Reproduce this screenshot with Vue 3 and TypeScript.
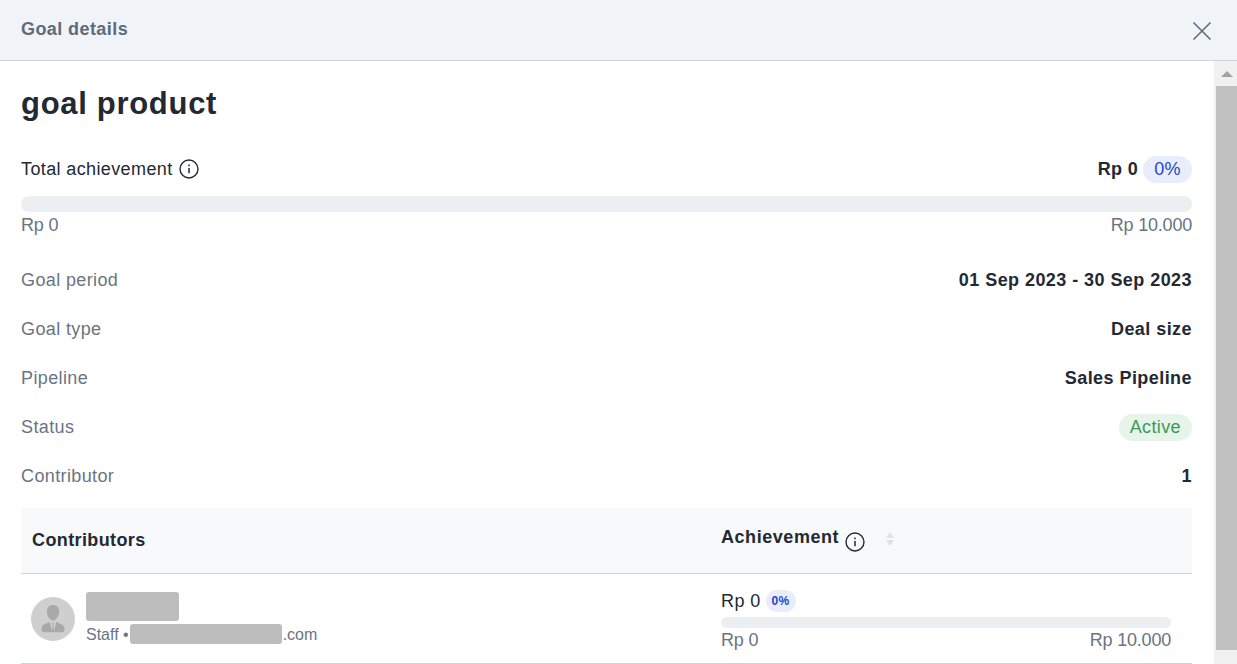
<script setup lang="ts">
interface DetailRow {
  label: string;
  value: string;
  kind?: "status";
}

const rows: DetailRow[] = [
  { label: "Goal period", value: "01 Sep 2023 - 30 Sep 2023" },
  { label: "Goal type", value: "Deal size" },
  { label: "Pipeline", value: "Sales Pipeline" },
  { label: "Status", value: "Active", kind: "status" },
  { label: "Contributor", value: "1" },
];
</script>

<template>
  <div class="modal">
    <header class="modal-header">
      <span class="modal-title">Goal details</span>
      <svg class="close" width="20" height="20" viewBox="0 0 20 20" fill="none">
        <path d="M1.500 1.500 18.500 18.500M18.500 1.500 1.500 18.500" stroke="#5f6b7a" stroke-width="1.6" />
      </svg>
    </header>

    <div class="modal-main">
      <div class="content">
        <h1 class="goal-name">goal product</h1>

        <div class="total">
          <div class="total-top">
            <span class="total-label">
              Total achievement
              <svg class="info" width="20" height="20" viewBox="0 0 20 20" fill="none">
                <circle cx="10" cy="10" r="9" stroke="#232933" stroke-width="1.4" />
                <path d="M10 9v5.200M10 5.600v1.600" stroke="#232933" stroke-width="1.500" />
              </svg>
            </span>
            <span class="total-value">
              <b>Rp 0</b>
              <span class="pct">0%</span>
            </span>
          </div>
          <div class="bar"></div>
          <div class="bar-ends">
            <span>Rp 0</span>
            <span>Rp 10.000</span>
          </div>
        </div>

        <div class="details">
          <div v-for="row in rows" :key="row.label" class="detail-row">
            <span class="detail-label">{{ row.label }}</span>
            <span v-if="row.kind === 'status'" class="status">{{ row.value }}</span>
            <b v-else class="detail-value">{{ row.value }}</b>
          </div>
        </div>

        <div class="table">
          <div class="table-head">
            <div class="col-name">Contributors</div>
            <div class="col-ach head-ach">
              <span>Achievement</span>
              <svg class="info-small" width="20" height="20" viewBox="0 0 20 20" fill="none">
                <circle cx="10" cy="10" r="9" stroke="#232933" stroke-width="1.4" />
                <path d="M10 9v5.200M10 5.600v1.600" stroke="#232933" stroke-width="1.500" />
              </svg>
              <svg class="sort" width="10" height="16" viewBox="0 0 10 16">
                <path d="M5 1 9 7H1ZM1 9h8l-4 6Z" fill="#dfe2e6" />
              </svg>
            </div>
          </div>

          <div class="table-row">
            <div class="col-name person">
              <div class="avatar">
                <svg width="44" height="44" viewBox="0 0 44 44">
                  <circle cx="22" cy="22" r="22" fill="#cfcfcf" />
                  <path d="M22 8c-3.600 0-6.200 2.700-6.200 6.200 0 3.600 2.500 9.300 6.200 9.300s6.200-5.700 6.200-9.300C28.200 10.700 25.600 8 22 8Z" fill="#a9a9a9" />
                  <path d="M18.800 25 13.500 27.200C11.700 28 10.500 29.800 10.500 31.800V33c0 1.300 1 2.200 2.200 2.200h18.600c1.200 0 2.200-.9 2.200-2.200v-1.200c0-2-1.200-3.800-3-4.600L25.200 25l-2.200 9.500-.6-6.500.8-2h-2.400l.8 2-.6 6.500Z" fill="#a9a9a9" />
                </svg>
              </div>
              <div class="person-text">
                <div class="mask-name"></div>
                <div class="person-sub">
                  <span class="sub-text">Staff •</span><span class="mask-mail"></span><span class="sub-text">.com</span>
                </div>
              </div>
            </div>
            <div class="col-ach">
              <div class="row-top">
                <span>Rp 0</span>
                <span class="pct-small">0%</span>
              </div>
              <div class="bar bar-small"></div>
              <div class="bar-ends small-ends">
                <span>Rp 0</span>
                <span>Rp 10.000</span>
              </div>
            </div>
          </div>
        </div>
      </div>

      <div class="scrollbar">
        <div class="scroll-up"></div>
        <div class="scroll-thumb"></div>
      </div>
    </div>
  </div>
</template>

<style>
html,
body {
  margin: 0;
  overflow: hidden;
  background: #fff;
}
</style>

<style scoped>
.modal {
  width: 1237px;
  height: 664px;
  overflow: hidden;
  display: flex;
  flex-direction: column;
  font-family: "Liberation Sans", Arial, sans-serif;
  color: #232933;
  font-size: 18px;
  letter-spacing: 0.38px;
}

.modal-header {
  height: 60px;
  flex: none;
  box-sizing: content-box;
  display: flex;
  align-items: center;
  justify-content: space-between;
  padding: 0 25px 0 21px;
  background: #f0f4f9;
  border-bottom: 1px solid #cfd4dc;
}

.modal-title {
  font-size: 18px;
  font-weight: 700;
  color: #5f6b7a;
  margin-top: -2px;
  letter-spacing: 0.42px;
}

.close {
  display: block;
  margin-top: 2px;
}

.modal-main {
  flex: 1;
  min-height: 0;
  display: flex;
}

.content {
  width: 1171px;
  flex: none;
  padding: 0 22px 0 21px;
}

.goal-name {
  margin: 23px 0 0;
  font-size: 31px;
  line-height: 40px;
  font-weight: 700;
  letter-spacing: 0.7px;
}

.total {
  margin-top: 30px;
}

.total-top {
  height: 30px;
  display: flex;
  align-items: center;
  justify-content: space-between;
}

.total-label {
  display: flex;
  align-items: center;
  gap: 6px;
}

.total-value {
  display: flex;
  align-items: center;
  gap: 5px;
}

.pct {
  height: 27px;
  line-height: 27px;
  padding: 0 11px;
  border-radius: 14px;
  background: #e9edfb;
  color: #2447c9;
}

.bar {
  height: 16px;
  margin-top: 12px;
  border-radius: 8px;
  background: #eceff2;
}

.bar-ends {
  display: flex;
  justify-content: space-between;
  line-height: 26px;
  color: #6a7482;
  letter-spacing: -0.2px;
}

.details {
  margin-top: 18px;
}

.detail-row {
  height: 49px;
  display: flex;
  align-items: center;
  justify-content: space-between;
  color: #6a7482;
}

.detail-value {
  color: #232933;
  letter-spacing: 0.44px;
}

.status {
  height: 27px;
  line-height: 27px;
  padding: 0 11px;
  border-radius: 14px;
  background: #e6f4ea;
  color: #3c9a55;
}

.table {
  margin-top: 7px;
}

.table-head {
  height: 65px;
  display: flex;
  align-items: center;
  background: #f8f9fb;
  border-bottom: 1px solid #cfd4dc;
  font-weight: 700;
}

.col-name {
  width: 700px;
  flex: none;
  box-sizing: border-box;
  padding-left: 11px;
}

.col-ach {
  width: 450px;
  flex: none;
}

.head-ach {
  display: flex;
  align-items: center;
  gap: 6px;
  margin-top: -7px;
  letter-spacing: 0.55px;
}

.info-small {
  margin-top: 10px;
}

.sort {
  margin-left: 14px;
  margin-top: 3px;
}

.table-row {
  height: 89px;
  display: flex;
  align-items: center;
  border-bottom: 1px solid #cfd4dc;
}

.person {
  display: flex;
  align-items: center;
  gap: 11px;
  padding-left: 10px;
}

.avatar {
  height: 44px;
  margin-top: 1px;
}

.avatar svg {
  display: block;
}

.person-text {
  display: flex;
  flex-direction: column;
  gap: 3px;
  margin-top: -2px;
}

.mask-name {
  width: 93px;
  height: 29px;
  border-radius: 3px;
  background: #bdbdbd;
}

.person-sub {
  display: flex;
  align-items: center;
  height: 20px;
  font-size: 16px;
  color: #6a7482;
  letter-spacing: 0;
}

.sub-text {
  padding-top: 2px;
}

.mask-mail {
  width: 152px;
  height: 20px;
  margin-left: 1px;
  margin-right: 1px;
  border-radius: 3px;
  background: #bdbdbd;
}

.row-top {
  display: flex;
  align-items: center;
  gap: 5px;
  height: 22px;
  margin-top: 5px;
}

.pct-small {
  height: 22px;
  line-height: 22px;
  padding: 0 6px;
  border-radius: 11px;
  background: #e9edfb;
  color: #2447c9;
  font-size: 12px;
  font-weight: 700;
}

.bar-small {
  height: 11px;
  margin-top: 5px;
}

.small-ends {
  line-height: 24px;
}

.scrollbar {
  width: 23px;
  flex: none;
  background: #f1f1f1;
  display: flex;
  flex-direction: column;
  align-items: flex-end;
}

.scroll-up {
  width: 21px;
  height: 25px;
  display: flex;
  align-items: center;
  justify-content: center;
}

.scroll-up::before {
  content: "";
  border-left: 6px solid transparent;
  border-right: 6px solid transparent;
  border-bottom: 6px solid #a3a3a3;
}

.scroll-thumb {
  width: 21px;
  height: 564px;
  background: #c1c1c1;
}
</style>
